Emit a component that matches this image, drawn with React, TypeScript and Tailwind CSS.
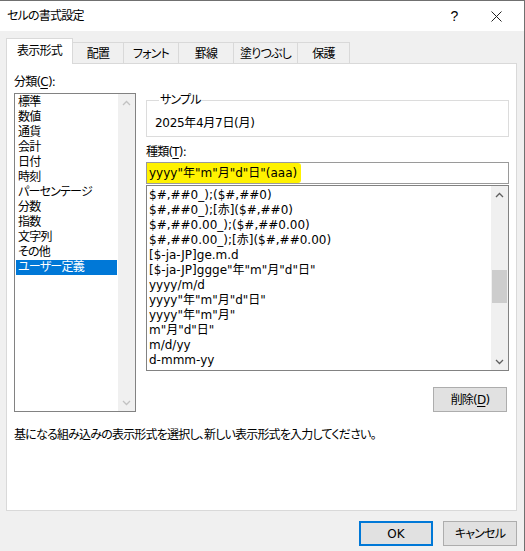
import React from "react";

const categories = [
  "標準",
  "数値",
  "通貨",
  "会計",
  "日付",
  "時刻",
  "パーセンテージ",
  "分数",
  "指数",
  "文字列",
  "その他",
  "ユーザー定義",
];

const formats = [
  "$#,##0_);($#,##0)",
  "$#,##0_);[赤]($#,##0)",
  "$#,##0.00_);($#,##0.00)",
  "$#,##0.00_);[赤]($#,##0.00)",
  "[$-ja-JP]ge.m.d",
  '[$-ja-JP]ggge"年"m"月"d"日"',
  "yyyy/m/d",
  'yyyy"年"m"月"d"日"',
  'yyyy"年"m"月"',
  'm"月"d"日"',
  "m/d/yy",
  "d-mmm-yy",
];

const tabs = ["配置", "フォント", "罫線", "塗りつぶし", "保護"];
const tabWidths = ["w-[51px]", "w-[55px]", "w-[55px]", "w-[64px]", "w-[52px]"];

function Chevron({ up, color }: { up?: boolean; color: string }) {
  return (
    <svg width="9" height="6" viewBox="0 0 9 6">
      <polyline
        points={up ? "1,5 4.5,1.5 8,5" : "1,1 4.5,4.5 8,1"}
        fill="none"
        stroke={color}
        strokeWidth="1.3"
      />
    </svg>
  );
}

function Underlined({ text, key1 }: { text: string; key1: string }) {
  return (
    <>
      {text}(<span className="underline underline-offset-2">{key1}</span>):
    </>
  );
}

export default function App() {
  return (
    <div className="w-[525px] h-[551px] bg-[#f0f0f0] border-r border-t border-[#707070] text-[12px] leading-[16px] text-black font-['DejaVu_Sans','Noto_Sans_CJK_JP',sans-serif] [font-feature-settings:'palt'] tracking-[-0.8px] overflow-hidden">
      {/* title bar */}
      <div className="h-[30px] bg-white flex items-center pl-[7px]">
        <span className="flex-1">セルの書式設定</span>
        <span className="w-[20px] text-center text-[14px] font-['Liberation_Sans',sans-serif] mr-[22px]">?</span>
        <span className="w-[20px] flex justify-center mr-[18px]">
          <svg width="11" height="11" viewBox="0 0 11 11">
            <path d="M0.5 0.5 L10.5 10.5 M10.5 0.5 L0.5 10.5" stroke="#222" strokeWidth="1" />
          </svg>
        </span>
      </div>

      {/* tabs */}
      <div className="flex items-end pl-[6px] mt-[7px] h-[26px] relative z-10">
        <div className="h-[26px] w-[67px] bg-white border border-b-0 border-[#d9d9d9] flex items-center justify-center pb-[1px]">
          表示形式
        </div>
        {tabs.map((t, i) => (
          <div
            key={t}
            className={`h-[22px] ${tabWidths[i]} border border-l-0 border-b-0 border-[#d9d9d9] flex items-center justify-center pt-[1px]`}
          >
            {t}
          </div>
        ))}
      </div>

      {/* panel */}
      <div className="ml-[6px] -mt-px w-[511px] h-[448px] bg-white border border-[#d9d9d9]">
        <div className="flex pl-[7px] pt-[10px]">
          {/* category */}
          <div className="w-[122px]">
            <div className="h-[16px]">
              <Underlined text="分類" key1="C" />
            </div>
            <div className="mt-[3px] h-[319px] border border-[#828282] flex">
              <div className="flex-1 p-px">
                {categories.map((c) => (
                  <div
                    key={c}
                    className={`h-[15px] leading-[15px] pl-[2px] ${
                      c === "ユーザー定義" ? "bg-[#0078d7] text-white" : ""
                    }`}
                  >
                    {c}
                  </div>
                ))}
              </div>
              <div className="w-[17px] bg-[#f0f0f0] flex flex-col justify-between">
                <div className="h-[17px] flex items-center justify-center">
                  <Chevron up color="#c2c2c2" />
                </div>
                <div className="h-[17px] flex items-center justify-center">
                  <Chevron color="#c2c2c2" />
                </div>
              </div>
            </div>
          </div>

          {/* right column */}
          <div className="ml-[10px] w-[363px] flex flex-col">
            <fieldset className="mt-[18px] border border-[#dcdcdc] pl-[8px] pt-[7px] pb-[5px]">
              <legend className="ml-[4px] px-[1px] leading-[16px]">サンプル</legend>
              <div className="tracking-[-0.3px]">2025年4月7日(月)</div>
            </fieldset>

            <div className="mt-[7px] h-[16px]">
              <Underlined text="種類" key1="T" />
            </div>
            <div className="mt-[2px] h-[22px] border border-[#9a9a9a] flex items-stretch tracking-normal">
              <span className="bg-[#fff200] rounded-r-[3px] pl-[2px] pr-[4px] leading-[20px]">
                yyyy"年"m"月"d"日"(aaa)
              </span>
            </div>

            <div className="mt-px h-[186px] border border-[#828282] flex tracking-normal">
              <div className="flex-1 pl-[2px] pt-[2px]">
                {formats.map((f) => (
                  <div key={f} className="h-[15px] leading-[15px] whitespace-nowrap">
                    {f}
                  </div>
                ))}
              </div>
              <div className="w-[17px] bg-[#f0f0f0] flex flex-col">
                <div className="h-[17px] flex items-center justify-center">
                  <Chevron up color="#606060" />
                </div>
                <div className="flex-1">
                  <div className="mt-[67px] mx-px h-[33px] bg-[#cdcdcd]" />
                </div>
                <div className="h-[17px] flex items-center justify-center">
                  <Chevron color="#606060" />
                </div>
              </div>
            </div>

            <div className="flex justify-end mt-[16px] mr-[2px]">
              <button className="w-[74px] h-[25px] bg-[#e1e1e1] border border-[#adadad] flex items-center justify-center">
                削除(<span className="underline underline-offset-2">D</span>)
              </button>
            </div>
          </div>
        </div>

        <div className="pl-[7px] mt-[15px]">
          基になる組み込みの表示形式を選択し、新しい表示形式を入力してください。
        </div>
      </div>

      {/* footer buttons */}
      <div className="flex justify-end gap-[10px] mt-[10px] mr-[7px]">
        <button className="w-[74px] h-[25px] bg-[#e1e1e1] border-2 border-[#0078d7] flex items-center justify-center tracking-normal">
          OK
        </button>
        <button className="w-[74px] h-[25px] bg-[#e1e1e1] border border-[#adadad] flex items-center justify-center">
          キャンセル
        </button>
      </div>
    </div>
  );
}
